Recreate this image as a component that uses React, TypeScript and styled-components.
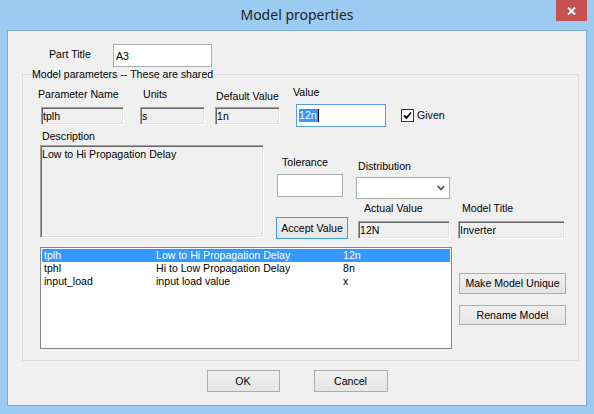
import styled, { createGlobalStyle } from 'styled-components';

const GlobalStyle = createGlobalStyle`
  html, body {
    margin: 0;
    padding: 0;
  }
  body {
    width: 594px;
    height: 414px;
    overflow: hidden;
    font-family: 'Liberation Sans', Arial, sans-serif;
    font-size: 10.6px;
    color: #000;
  }
  * {
    box-sizing: border-box;
  }
`

const Window = styled.div`
    width: 594px;
    height: 414px;
    background: #9ccbf2;
    display: flex;
    flex-direction: column;
`

const TitleBar = styled.div`
    height: 30px;
    display: grid;
    grid-template-columns: 1fr auto 1fr;
    align-items: start;
`

const Title = styled.div`
    grid-column: 2;
    font-family: 'Noto Sans', sans-serif;
    font-size: 14px;
    line-height: 30px;
    color: #222;
`

const CloseButton = styled.div`
    grid-column: 3;
    justify-self: end;
    margin-right: 7px;
    width: 31px;
    height: 21px;
    background: #c75050;
    display: flex;
    align-items: center;
    justify-content: center;
`

const Client = styled.div`
    flex: 1;
    margin: 0 7px 8px 7px;
    background: #f0f0f0;
    border: 1px solid #7fa9d6;
    display: flex;
    flex-direction: column;
`

const PartRow = styled.div`
    display: flex;
    align-items: center;
    margin: 13px 0 0 41px;
`

const PartLabel = styled.span`
    width: 64px;
    line-height: 13px;
    margin-bottom: 3px;
`

const TextBox = styled.div<{ $w: number; $h: number; $dx?: number; $focus?: boolean }>`
    width: ${p => p.$w}px;
    height: ${p => p.$h}px;
    margin-left: ${p => p.$dx || 0}px;
    background: #fff;
    border: 1px solid ${p => (p.$focus ? '#569de5' : '#abadb3')};
    padding-left: 2px;
    display: flex;
    align-items: center;
    white-space: nowrap;
`

const Selected = styled.span`
    background: #3399ff;
    color: #fff;
    line-height: 13px;
    padding-right: 1px;
    border-right: 1px solid #000;
`

const Group = styled.fieldset`
    margin: 1px 7px 0 14px;
    border: 1px solid #dcdcdc;
    padding: 5px 0 11px 0;
    min-width: 0;

    legend {
        margin-left: 8px;
        padding: 0 1px;
        line-height: 13px;
    }
`

const Row = styled.div<{ $mt?: number }>`
    display: flex;
    align-items: flex-start;
    margin-top: ${p => p.$mt || 0}px;
`

const Column = styled.div<{ $ml?: number; $w?: number }>`
    display: flex;
    flex-direction: column;
    margin-left: ${p => p.$ml || 0}px;
    ${p => (p.$w ? `width: ${p.$w}px;` : '')}
`

const Label = styled.span<{ $dx?: number; $mt?: number; $mb?: number }>`
    display: block;
    line-height: 13px;
    white-space: nowrap;
    margin: ${p => p.$mt || 0}px 0 ${p => p.$mb || 0}px ${p => p.$dx || 0}px;
`

const Sunken = styled.div<{ $w: number; $h: number; $dx?: number; $top?: boolean }>`
    width: ${p => p.$w}px;
    height: ${p => p.$h}px;
    margin-left: ${p => p.$dx || 0}px;
    background: #f0f0f0;
    border-top: 1px solid #a0a0a0;
    border-left: 1px solid #a0a0a0;
    border-bottom: 1px solid #fff;
    border-right: 1px solid #fff;
    box-shadow: inset 1px 1px 0 #696969, inset -1px -1px 0 #e3e3e3;
    padding: ${p => (p.$top ? '2px 0 0 1px' : '0 0 0 1px')};
    display: flex;
    align-items: ${p => (p.$top ? 'flex-start' : 'center')};
    line-height: 13px;
    white-space: nowrap;
`

const CheckRow = styled.label`
    display: flex;
    align-items: center;
    margin: 23px 0 0 15px;
    line-height: 13px;
`

const CheckBox = styled.span`
    width: 13px;
    height: 13px;
    border: 1px solid #333;
    background: #fff;
    display: flex;
    align-items: center;
    justify-content: center;
    margin-right: 3px;
`

const Select = styled.div`
    width: 94px;
    height: 22px;
    background: #fff;
    border: 1px solid #acacac;
    display: flex;
    align-items: center;
    justify-content: flex-end;
    padding-right: 4px;
`

const Button = styled.div<{ $w: number; $h: number; $ml?: number; $mt?: number; $focus?: boolean }>`
    width: ${p => p.$w}px;
    height: ${p => p.$h}px;
    margin: ${p => p.$mt || 0}px 0 0 ${p => p.$ml || 0}px;
    border: 1px solid ${p => (p.$focus ? '#3c9be8' : '#acacac')};
    background: linear-gradient(#f0f0f0, #e5e5e5);
    display: flex;
    align-items: center;
    justify-content: center;
    white-space: nowrap;
    line-height: 13px;
`

const ListBox = styled.div`
    width: 412px;
    height: 102px;
    margin-left: 17px;
    background: #fff;
    border: 1px solid #828790;
    padding: 1px;
`

const ListRow = styled.div<{ $selected?: boolean }>`
    display: grid;
    grid-template-columns: 112px 187px 1fr;
    height: 13px;
    line-height: 13px;
    padding-left: 2px;
    white-space: nowrap;
    background: ${p => (p.$selected ? '#3399ff' : 'transparent')};
    color: ${p => (p.$selected ? '#fff' : '#000')};
`

const Footer = styled.div`
    display: flex;
    justify-content: center;
    gap: 34px;
    margin-top: 9px;
`

const params = [
    { name: 'tplh', desc: 'Low to Hi Propagation Delay', value: '12n' },
    { name: 'tphl', desc: 'Hi to Low Propagation Delay', value: '8n' },
    { name: 'input_load', desc: 'input load value', value: 'x' },
];

export default function App() {
    return (
        <Window>
            <GlobalStyle />
            <TitleBar>
                <Title>Model properties</Title>
                <CloseButton>
                    <svg width="9" height="8" viewBox="0 0 9 8">
                        <path d="M1 0.5 L8 7.5 M8 0.5 L1 7.5" stroke="#fff" strokeWidth="2" />
                    </svg>
                </CloseButton>
            </TitleBar>

            <Client>
                <PartRow>
                    <PartLabel>Part Title</PartLabel>
                    <TextBox $w={99} $h={23}>A3</TextBox>
                </PartRow>

                <Group>
                    <legend>Model parameters -- These are shared</legend>

                    <Row>
                        <Column $ml={15} $w={86}>
                            <Label $mt={2} $mb={6}>Parameter Name</Label>
                            <Sunken $w={83} $h={18} $dx={3}>tplh</Sunken>
                        </Column>
                        <Column $ml={16} $w={65}>
                            <Label $dx={3} $mt={2} $mb={6}>Units</Label>
                            <Sunken $w={65} $h={18}>s</Sunken>
                        </Column>
                        <Column $ml={10} $w={65}>
                            <Label $dx={1} $mt={4} $mb={4}>Default Value</Label>
                            <Sunken $w={65} $h={18}>1n</Sunken>
                        </Column>
                        <Column $ml={13} $w={93}>
                            <Label $mb={5}>Value</Label>
                            <TextBox $w={90} $h={23} $dx={3} $focus>
                                <Selected>12n</Selected>
                            </TextBox>
                        </Column>
                        <CheckRow>
                            <CheckBox>
                                <svg width="9" height="9" viewBox="0 0 9 9">
                                    <path d="M1 4.5 L3.5 7 L8 1.5" stroke="#000" strokeWidth="1.8" fill="none" />
                                </svg>
                            </CheckBox>
                            Given
                        </CheckRow>
                    </Row>

                    <Row>
                        <Column $ml={17} $w={224}>
                            <Label $dx={2} $mt={3} $mb={2}>Description</Label>
                            <Sunken $w={224} $h={93} $top>Low to Hi Propagation Delay</Sunken>
                        </Column>
                        <Column $ml={12}>
                            <Row>
                                <Column $w={67}>
                                    <Label $dx={6} $mt={29} $mb={5}>Tolerance</Label>
                                    <TextBox $w={66} $h={23} $dx={1} />
                                </Column>
                                <Column $ml={13} $w={94}>
                                    <Label $dx={2} $mt={33} $mb={4}>Distribution</Label>
                                    <Select>
                                        <svg width="8" height="6" viewBox="0 0 8 6">
                                            <path d="M0.8 1 L4 4.5 L7.2 1" stroke="#555" strokeWidth="1.8" fill="none" />
                                        </svg>
                                    </Select>
                                </Column>
                            </Row>
                            <Row>
                                <Button $w={72} $h={22} $mt={18} $focus>Accept Value</Button>
                                <Column $ml={10} $w={92}>
                                    <Label $dx={6} $mt={3} $mb={6}>Actual Value</Label>
                                    <Sunken $w={92} $h={18}>12N</Sunken>
                                </Column>
                                <Column $ml={8} $w={107}>
                                    <Label $dx={4} $mt={3} $mb={6}>Model Title</Label>
                                    <Sunken $w={107} $h={18}>Inverter</Sunken>
                                </Column>
                            </Row>
                        </Column>
                    </Row>

                    <Row $mt={8}>
                        <ListBox>
                            {params.map((p, i) => (
                                <ListRow key={p.name} $selected={i === 0}>
                                    <span>{p.name}</span>
                                    <span>{p.desc}</span>
                                    <span>{p.value}</span>
                                </ListRow>
                            ))}
                        </ListBox>
                        <Column $ml={7}>
                            <Button $w={107} $h={21} $mt={26}>Make Model Unique</Button>
                            <Button $w={107} $h={20} $mt={11}>Rename Model</Button>
                        </Column>
                    </Row>
                </Group>

                <Footer>
                    <Button $w={73} $h={22}>OK</Button>
                    <Button $w={74} $h={22}>Cancel</Button>
                </Footer>
            </Client>
        </Window>
    )
}
